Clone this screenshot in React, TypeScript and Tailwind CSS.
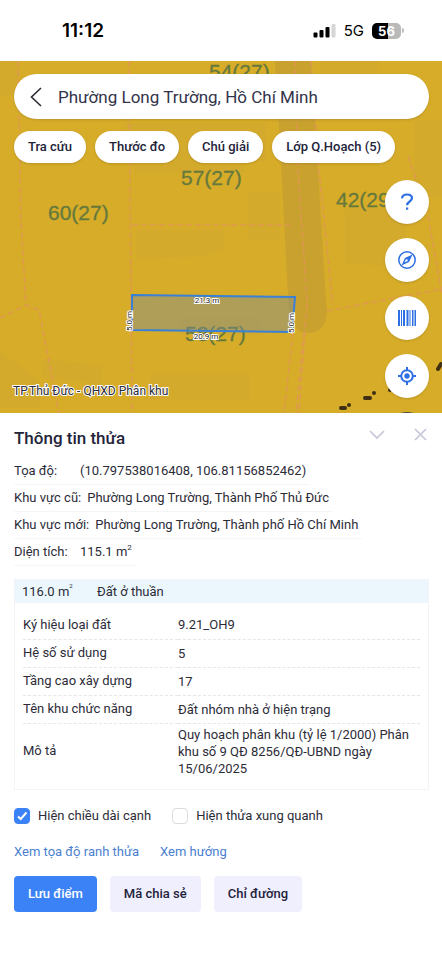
// App.tsx
import { useState } from "react";
import type { ReactNode } from "react";

const chips = ["Tra cứu", "Thước đo", "Chú giải", "Lớp Q.Hoạch (5)"];

const planning = [
  { label: "Ký hiệu loại đất", value: "9.21_OH9" },
  { label: "Hệ số sử dụng", value: "5" },
  { label: "Tầng cao xây dựng", value: "17" },
  { label: "Tên khu chức năng", value: "Đất nhóm nhà ở hiện trạng" },
  {
    label: "Mô tả",
    value:
      "Quy hoạch phân khu (tỷ lệ 1/2000) Phân khu số 9 QĐ 8256/QĐ-UBND ngày 15/06/2025",
  },
];

function StatusBar() {
  return (
    <div className="flex h-[61px] items-center justify-between bg-white pl-[62px] pr-[38px] text-black">
      <span className="font-[Inter,sans-serif] text-[19px] font-semibold">11:12</span>
      <div className="flex items-center gap-2">
        <svg className="h-4 w-[23px]" viewBox="0 0 23 16">
          <rect x="0.5" y="9.5" width="4" height="5" rx="1" />
          <rect x="6.5" y="7" width="4" height="7.5" rx="1" />
          <rect x="12.5" y="4" width="4" height="10.5" rx="1" />
          <rect x="18.5" y="1" width="4" height="13.5" rx="1" fill="#d6d6d6" />
        </svg>
        <span className="font-[Inter,sans-serif] text-[15px]">5G</span>
        <div className="flex items-center">
          <span className="flex h-4 w-[29px] items-center justify-center rounded-[5px] bg-linear-to-r from-black from-55% to-[#b9b9b9] to-55% font-[Inter,sans-serif] text-[13px] font-bold text-white">
            56
          </span>
          <span className="ml-px h-[5px] w-[2px] rounded-r-full bg-[#bdbdbd]" />
        </div>
      </div>
    </div>
  );
}

function ParcelMap() {
  return (
    <svg
      className="absolute inset-0 h-full w-full"
      viewBox="0 0 442 352"
      preserveAspectRatio="xMinYMin slice"
      fontFamily="Roboto, sans-serif"
    >
      <rect width="442" height="352" fill="#d6ac29" />

      {/* faint building blocks */}
      <g fill="#d2a732">
        <path d="M0 0h20v34H0zM134 100h110v12H134zM136 168h88v22l-30 6-58 2z" opacity="0.4" />
        <path d="M248 132h32v48h-32zM345 148h60v58l-60-4z" opacity="0.5" />
        <path d="M44 298l58 6v20l-60-8zM0 290l40 30v26H0zM150 312h100v26H150zM178 256h84v18h-84z" opacity="0.4" />
        <path d="M320 0h60v14h-60zM126 62h140v38H126zM414 60h28v76h-28z" opacity="0.5" />
      </g>

      {/* road */}
      <path d="M275 0h36l7 110 8 130c4 22-6 32-16 32-12 0-20-6-21-20l-8-150z" fill="#c9a12f" />

      {/* lot boundaries */}
      <g fill="none" stroke="#e2965a" strokeWidth="1.500" strokeDasharray="6 3" opacity="0.8">
        <path d="M18 0l3 160 5 84 13 5 20 103" />
        <path d="M0 257l26-13" />
        <path d="M129 0l3 352" />
        <path d="M132 164h158" />
        <path d="M295 0l3 110 9 130-8 112" />
        <path d="M311 0l8 110 14 134" />
        <path d="M293 271l-9 81M304 271l-8 81" />
        <path d="M327 250l115-22" />
        <path d="M408 95l20 60 14 78" />
      </g>

      <g fill="#66793c" stroke="#66793c" strokeWidth="0.300" fontFamily="Liberation Sans, Arial, sans-serif" fontSize="21">
        <text x="209" y="18">54(27)</text>
        <text x="181" y="124">57(27)</text>
        <text x="48" y="159">60(27)</text>
        <text x="336" y="146">42(29)</text>
        <text x="185" y="280">58(27)</text>
      </g>

      <g fill="none" stroke="#3f3014" strokeWidth="4" strokeLinecap="round">
        <path d="M341 347h4M349 344h0M365 337h5M374 332h0M390 329h0M438 308l3-5" />
      </g>

      {/* selected parcel */}
      <path d="M132 234l163 2-3 35-160-2z" fill="#7f8f90" fillOpacity="0.45" stroke="#3a80d6" strokeWidth="2" />
      <g fill="#222222" stroke="#ffffff" strokeWidth="2" paintOrder="stroke" fontSize="8" textAnchor="middle">
        <text x="207" y="242">21.3 m</text>
        <text x="206" y="278">20.9 m</text>
        <text transform="translate(132 260) rotate(-90)">5.0 m</text>
        <text transform="translate(294 262) rotate(-90)">5.0 m</text>
      </g>
      <text x="13" y="334" fill="#2b2b3b" stroke="#ffffff" strokeWidth="2" paintOrder="stroke" fontSize="12">
        TP.Thủ Đức - QHXD Phân khu
      </text>
    </svg>
  );
}

function MapButton({ label, children }: { label: string; children: ReactNode }) {
  return (
    <button
      type="button"
      aria-label={label}
      className="flex size-11 shrink-0 items-center justify-center rounded-full bg-white text-[#2f6fe4] shadow"
    >
      {children}
    </button>
  );
}

function MapTools() {
  return (
    <div className="mt-[17px] flex flex-col items-end gap-[14px]">
      <MapButton label="Trợ giúp">
        <svg className="size-5" viewBox="0 0 20 20" fill="none" stroke="currentColor" strokeWidth="2.200">
          <path d="M5 6.400C5.200 3.900 7.200 2.500 10 2.500s5 1.400 5 3.800c0 3.300-4.900 3.200-4.900 6.900" />
          <path d="M10.100 15.500v2.200" />
        </svg>
      </MapButton>
      <MapButton label="La bàn">
        <svg className="size-5" viewBox="0 0 20 20" fill="none" stroke="currentColor" strokeWidth="1.500">
          <circle cx="10" cy="10" r="8.200" />
          <path d="M14 6l-2.500 5.500L6 14l2.500-5.500z" />
          <path d="M14 6l-5.500 2.500 3 3z" fill="currentColor" strokeWidth="0.500" />
          <circle cx="10" cy="10" r="0.800" fill="#ffffff" stroke="none" />
        </svg>
      </MapButton>
      <MapButton label="Mã vạch">
        <svg className="size-5" viewBox="0 0 20 20" fill="currentColor">
          <path d="M1 2h2v16H1zM4 2h1v16H4zM6 2h2v16H6zM9.500 2h2v16h-2zM12.500 2h1v16h-1zM15 2h1.500v16H15zM17.500 2H19v16h-1.500z" />
        </svg>
      </MapButton>
      <MapButton label="Vị trí của tôi">
        <svg className="size-5" viewBox="0 0 20 20" fill="none" stroke="currentColor" strokeWidth="2">
          <circle cx="10" cy="10" r="5.800" />
          <circle cx="10" cy="10" r="2.700" fill="currentColor" stroke="none" />
          <path d="M10 1v3.500M10 15.500V19M1 10h3.500M15.500 10H19" />
        </svg>
      </MapButton>
      <button type="button" aria-label="Lớp nền" className="size-11 shrink-0 rounded-full bg-[#4d4f45]" />
    </div>
  );
}

function InfoRow({ label, children }: { label: string; children: ReactNode }) {
  return (
    <div className="flex h-[27px] w-fit items-center border-b border-[#f6f6f6] pr-1">
      <dt className="min-w-[66px] pr-[6px]">{label}</dt>
      <dd>{children}</dd>
    </div>
  );
}

function PlanningCard() {
  return (
    <section className="mt-[13px] border border-[#f3f4f8]">
      <h2 className="flex h-[23px] items-center bg-[#ebf7fd] px-[7px]">
        <span className="w-[75px]">
          116.0 m<sup className="-top-2 text-[6px]">2</sup>
        </span>
        Đất ở thuần
      </h2>
      <div className="px-2 pt-2 pb-[10px]">
        <table className="w-full">
          <tbody>
            {planning.map((row) => (
              <tr key={row.label} className="border-b border-dashed border-[#e6e6e6] last:border-b-0">
                <th scope="row" className="h-7 w-[155px] text-left font-normal">
                  {row.label}
                </th>
                <td className="py-[2px] leading-[17px]">{row.value}</td>
              </tr>
            ))}
          </tbody>
        </table>
      </div>
    </section>
  );
}

interface CheckProps {
  label: string;
  checked: boolean;
  onChange: (checked: boolean) => void;
}

function Check({ label, checked, onChange }: CheckProps) {
  return (
    <label className="flex items-center gap-2">
      <span className="grid size-4">
        <input
          type="checkbox"
          checked={checked}
          onChange={(e) => onChange(e.target.checked)}
          className="peer col-start-1 row-start-1 size-4 appearance-none rounded-[4px] border border-[#dcdce0] bg-white checked:border-[#3b82f6] checked:bg-[#3b82f6]"
        />
        <svg
          className="pointer-events-none invisible col-start-1 row-start-1 size-4 peer-checked:visible"
          viewBox="0 0 16 16"
          fill="none"
          stroke="#ffffff"
          strokeWidth="2"
        >
          <path d="M4 8.500l2.700 2.500L12.500 4.500" />
        </svg>
      </span>
      {label}
    </label>
  );
}

export default function App() {
  const [query, setQuery] = useState("Phường Long Trường, Hồ Chí Minh");
  const [showEdges, setShowEdges] = useState(true);
  const [showNearby, setShowNearby] = useState(false);

  return (
    <div className="flex min-h-screen flex-col bg-white font-[Roboto,sans-serif] text-[13px] leading-5 text-[#2c2c38]">
      <StatusBar />

      <div className="relative h-[352px] overflow-hidden">
        <ParcelMap />
        <div className="relative pt-[13px] pr-[13px] pl-[14px]">
          <div className="flex h-[45px] items-center rounded-full bg-white px-4 shadow">
            <button type="button" aria-label="Quay lại">
              <svg className="h-5 w-3" viewBox="0 0 12 20" fill="none" stroke="#2c2c38" strokeWidth="1.600">
                <path d="M11 1L1.500 10 11 19" />
              </svg>
            </button>
            <input
              aria-label="Tìm kiếm"
              value={query}
              onChange={(e) => setQuery(e.target.value)}
              className="ml-4 min-w-0 flex-1 text-[17px] text-[#33334a] outline-none"
            />
          </div>
          <div className="mt-3 flex gap-[9px]">
            {chips.map((chip) => (
              <button
                key={chip}
                type="button"
                className="h-8 rounded-full bg-white px-[14px] font-medium whitespace-nowrap text-[#23233a] shadow"
              >
                {chip}
              </button>
            ))}
          </div>
          <MapTools />
        </div>
      </div>

      <main className="pr-[13px] pb-12 pl-[14px]">
        <div className="flex justify-between pt-3">
          <h1 className="text-[17px] leading-[26px] font-medium text-[#23233a]">Thông tin thửa</h1>
          <div className="flex items-start gap-7 pt-[2px] text-[#c6c7da]">
            <button type="button" aria-label="Thu gọn">
              <svg className="size-4" viewBox="0 0 16 16" fill="none" stroke="currentColor" strokeWidth="1.700">
                <path d="M1 4l7 7 7-7" />
              </svg>
            </button>
            <button type="button" aria-label="Đóng">
              <svg className="size-4" viewBox="0 0 16 16" fill="none" stroke="currentColor" strokeWidth="1.700">
                <path d="M2 2l11 11M13 2L2 13" />
              </svg>
            </button>
          </div>
        </div>

        <dl className="mt-[7px]">
          <InfoRow label="Tọa độ:">(10.797538016408, 106.81156852462)</InfoRow>
          <InfoRow label="Khu vực cũ:">Phường Long Trường, Thành Phố Thủ Đức</InfoRow>
          <InfoRow label="Khu vực mới:">Phường Long Trường, Thành phố Hồ Chí Minh</InfoRow>
          <InfoRow label="Diện tích:">
            115.1 m<sup className="-top-[6px] text-[8px]">2</sup>
          </InfoRow>
        </dl>

        <PlanningCard />

        <div className="mt-4 flex gap-[21px]">
          <Check label="Hiện chiều dài cạnh" checked={showEdges} onChange={setShowEdges} />
          <Check label="Hiện thửa xung quanh" checked={showNearby} onChange={setShowNearby} />
        </div>

        <div className="mt-4 flex gap-[21px] text-[#4a7fd0]">
          <a href="#ranh-thua">Xem tọa độ ranh thửa</a>
          <a href="#huong">Xem hướng</a>
        </div>

        <div className="mt-[14px] flex gap-[13px] font-medium text-[#23233a]">
          <button type="button" className="h-9 rounded bg-[#3b82f6] px-[14px] text-white">
            Lưu điểm
          </button>
          <button type="button" className="h-9 rounded bg-[#efeffe] px-[14px]">
            Mã chia sẻ
          </button>
          <button type="button" className="h-9 rounded bg-[#efeffe] px-[14px]">
            Chỉ đường
          </button>
        </div>
      </main>
    </div>
  );
}
